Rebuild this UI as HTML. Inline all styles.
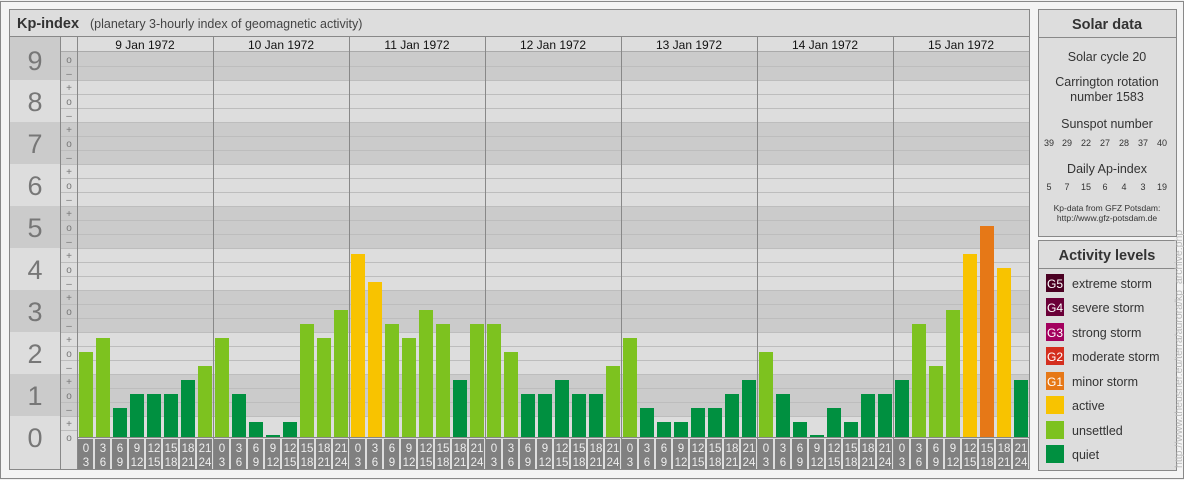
<!DOCTYPE html>
<html><head><meta charset="utf-8"><style>
html,body{margin:0;padding:0;background:#f0f0f0;}
svg{display:block;font-family:"Liberation Sans",sans-serif;}
</style></head><body>
<svg width="1184" height="480" viewBox="0 0 1184 480" xmlns="http://www.w3.org/2000/svg">
<rect x="0.5" y="1.5" width="1183" height="477" fill="#f4f4f4" stroke="#888"/>
<rect x="9.5" y="9.5" width="1020" height="460" fill="#dddddd" stroke="#888"/>
<text x="17" y="28" font-size="14.5" font-weight="bold" fill="#333">Kp-index</text>
<text x="90" y="28" font-size="12.5" fill="#444">(planetary 3-hourly index of geomagnetic activity)</text>
<line x1="10" y1="36.5" x2="1029" y2="36.5" stroke="#888"/>
<g fill="#cbcbcb">
<rect x="10" y="37" width="51" height="43"/>
<rect x="10" y="122" width="51" height="42"/>
<rect x="10" y="206" width="51" height="42"/>
<rect x="10" y="290" width="51" height="42"/>
<rect x="10" y="374" width="51" height="42"/>
<rect x="60" y="52" width="969" height="28"/>
<rect x="60" y="122" width="969" height="42"/>
<rect x="60" y="206" width="969" height="42"/>
<rect x="60" y="290" width="969" height="42"/>
<rect x="60" y="374" width="969" height="42"/>
</g>
<g stroke="#bdbdbd" stroke-width="1">
<line x1="60" y1="66.5" x2="1029" y2="66.5"/><line x1="60" y1="80.5" x2="1029" y2="80.5"/>
<line x1="60" y1="94.5" x2="1029" y2="94.5"/><line x1="60" y1="108.5" x2="1029" y2="108.5"/>
<line x1="60" y1="122.5" x2="1029" y2="122.5"/><line x1="60" y1="136.5" x2="1029" y2="136.5"/>
<line x1="60" y1="150.5" x2="1029" y2="150.5"/><line x1="60" y1="164.5" x2="1029" y2="164.5"/>
<line x1="60" y1="178.5" x2="1029" y2="178.5"/><line x1="60" y1="192.5" x2="1029" y2="192.5"/>
<line x1="60" y1="206.5" x2="1029" y2="206.5"/><line x1="60" y1="220.5" x2="1029" y2="220.5"/>
<line x1="60" y1="234.5" x2="1029" y2="234.5"/><line x1="60" y1="248.5" x2="1029" y2="248.5"/>
<line x1="60" y1="262.5" x2="1029" y2="262.5"/><line x1="60" y1="276.5" x2="1029" y2="276.5"/>
<line x1="60" y1="290.5" x2="1029" y2="290.5"/><line x1="60" y1="304.5" x2="1029" y2="304.5"/>
<line x1="60" y1="318.5" x2="1029" y2="318.5"/><line x1="60" y1="332.5" x2="1029" y2="332.5"/>
<line x1="60" y1="346.5" x2="1029" y2="346.5"/><line x1="60" y1="360.5" x2="1029" y2="360.5"/>
<line x1="60" y1="374.5" x2="1029" y2="374.5"/><line x1="60" y1="388.5" x2="1029" y2="388.5"/>
<line x1="60" y1="402.5" x2="1029" y2="402.5"/><line x1="60" y1="416.5" x2="1029" y2="416.5"/>
<line x1="60" y1="430.5" x2="77" y2="430.5"/>
</g>
<rect x="77" y="37" width="952" height="14" fill="#dddddd"/>
<line x1="60" y1="51.5" x2="1029" y2="51.5" stroke="#aaa"/>
<g font-size="12" fill="#111" text-anchor="middle">
<text x="145" y="49">9 Jan 1972</text><text x="281" y="49">10 Jan 1972</text>
<text x="417" y="49">11 Jan 1972</text><text x="553" y="49">12 Jan 1972</text>
<text x="689" y="49">13 Jan 1972</text><text x="825" y="49">14 Jan 1972</text>
<text x="961" y="49">15 Jan 1972</text>
</g>
<g font-size="27" fill="#777" text-anchor="middle">
<text x="35" y="70">9</text><text x="35" y="111">8</text><text x="35" y="153">7</text>
<text x="35" y="195">6</text><text x="35" y="237">5</text><text x="35" y="279">4</text>
<text x="35" y="321">3</text><text x="35" y="363">2</text><text x="35" y="405">1</text>
<text x="35" y="447">0</text>
</g>
<g font-size="10" fill="#777" text-anchor="middle">
<text x="69" y="63">o</text><text x="69" y="77">–</text>
<text x="69" y="91">+</text><text x="69" y="105">o</text><text x="69" y="119">–</text>
<text x="69" y="133">+</text><text x="69" y="147">o</text><text x="69" y="161">–</text>
<text x="69" y="175">+</text><text x="69" y="189">o</text><text x="69" y="203">–</text>
<text x="69" y="217">+</text><text x="69" y="231">o</text><text x="69" y="245">–</text>
<text x="69" y="259">+</text><text x="69" y="273">o</text><text x="69" y="287">–</text>
<text x="69" y="301">+</text><text x="69" y="315">o</text><text x="69" y="329">–</text>
<text x="69" y="343">+</text><text x="69" y="357">o</text><text x="69" y="371">–</text>
<text x="69" y="385">+</text><text x="69" y="399">o</text><text x="69" y="413">–</text>
<text x="69" y="427">+</text><text x="69" y="441">o</text>
</g>
<g>
<rect x="79" y="352" width="14" height="85" fill="#7dc21f"/>
<rect x="96" y="338" width="14" height="99" fill="#7dc21f"/>
<rect x="113" y="408" width="14" height="29" fill="#009040"/>
<rect x="130" y="394" width="14" height="43" fill="#009040"/>
<rect x="147" y="394" width="14" height="43" fill="#009040"/>
<rect x="164" y="394" width="14" height="43" fill="#009040"/>
<rect x="181" y="380" width="14" height="57" fill="#009040"/>
<rect x="198" y="366" width="14" height="71" fill="#7dc21f"/>
<rect x="215" y="338" width="14" height="99" fill="#7dc21f"/>
<rect x="232" y="394" width="14" height="43" fill="#009040"/>
<rect x="249" y="422" width="14" height="15" fill="#009040"/>
<rect x="266" y="435" width="14" height="2" fill="#009040"/>
<rect x="283" y="422" width="14" height="15" fill="#009040"/>
<rect x="300" y="324" width="14" height="113" fill="#7dc21f"/>
<rect x="317" y="338" width="14" height="99" fill="#7dc21f"/>
<rect x="334" y="310" width="14" height="127" fill="#7dc21f"/>
<rect x="351" y="254" width="14" height="183" fill="#f8c300"/>
<rect x="368" y="282" width="14" height="155" fill="#f8c300"/>
<rect x="385" y="324" width="14" height="113" fill="#7dc21f"/>
<rect x="402" y="338" width="14" height="99" fill="#7dc21f"/>
<rect x="419" y="310" width="14" height="127" fill="#7dc21f"/>
<rect x="436" y="324" width="14" height="113" fill="#7dc21f"/>
<rect x="453" y="380" width="14" height="57" fill="#009040"/>
<rect x="470" y="324" width="14" height="113" fill="#7dc21f"/>
<rect x="487" y="324" width="14" height="113" fill="#7dc21f"/>
<rect x="504" y="352" width="14" height="85" fill="#7dc21f"/>
<rect x="521" y="394" width="14" height="43" fill="#009040"/>
<rect x="538" y="394" width="14" height="43" fill="#009040"/>
<rect x="555" y="380" width="14" height="57" fill="#009040"/>
<rect x="572" y="394" width="14" height="43" fill="#009040"/>
<rect x="589" y="394" width="14" height="43" fill="#009040"/>
<rect x="606" y="366" width="14" height="71" fill="#7dc21f"/>
<rect x="623" y="338" width="14" height="99" fill="#7dc21f"/>
<rect x="640" y="408" width="14" height="29" fill="#009040"/>
<rect x="657" y="422" width="14" height="15" fill="#009040"/>
<rect x="674" y="422" width="14" height="15" fill="#009040"/>
<rect x="691" y="408" width="14" height="29" fill="#009040"/>
<rect x="708" y="408" width="14" height="29" fill="#009040"/>
<rect x="725" y="394" width="14" height="43" fill="#009040"/>
<rect x="742" y="380" width="14" height="57" fill="#009040"/>
<rect x="759" y="352" width="14" height="85" fill="#7dc21f"/>
<rect x="776" y="394" width="14" height="43" fill="#009040"/>
<rect x="793" y="422" width="14" height="15" fill="#009040"/>
<rect x="810" y="435" width="14" height="2" fill="#009040"/>
<rect x="827" y="408" width="14" height="29" fill="#009040"/>
<rect x="844" y="422" width="14" height="15" fill="#009040"/>
<rect x="861" y="394" width="14" height="43" fill="#009040"/>
<rect x="878" y="394" width="14" height="43" fill="#009040"/>
<rect x="895" y="380" width="14" height="57" fill="#009040"/>
<rect x="912" y="324" width="14" height="113" fill="#7dc21f"/>
<rect x="929" y="366" width="14" height="71" fill="#7dc21f"/>
<rect x="946" y="310" width="14" height="127" fill="#7dc21f"/>
<rect x="963" y="254" width="14" height="183" fill="#f8c300"/>
<rect x="980" y="226" width="14" height="211" fill="#e67817"/>
<rect x="997" y="268" width="14" height="169" fill="#f8c300"/>
<rect x="1014" y="380" width="14" height="57" fill="#009040"/>
</g>
<rect x="77" y="437" width="952" height="32" fill="#dddddd"/>
<line x1="77" y1="437.5" x2="1029" y2="437.5" stroke="#888"/>
<g fill="#808080">
<rect x="78" y="439" width="15" height="30"/><rect x="95" y="439" width="15" height="30"/><rect x="112" y="439" width="15" height="30"/><rect x="129" y="439" width="15" height="30"/><rect x="146" y="439" width="15" height="30"/><rect x="163" y="439" width="15" height="30"/><rect x="180" y="439" width="15" height="30"/><rect x="197" y="439" width="15" height="30"/>
<rect x="214" y="439" width="15" height="30"/><rect x="231" y="439" width="15" height="30"/><rect x="248" y="439" width="15" height="30"/><rect x="265" y="439" width="15" height="30"/><rect x="282" y="439" width="15" height="30"/><rect x="299" y="439" width="15" height="30"/><rect x="316" y="439" width="15" height="30"/><rect x="333" y="439" width="15" height="30"/>
<rect x="350" y="439" width="15" height="30"/><rect x="367" y="439" width="15" height="30"/><rect x="384" y="439" width="15" height="30"/><rect x="401" y="439" width="15" height="30"/><rect x="418" y="439" width="15" height="30"/><rect x="435" y="439" width="15" height="30"/><rect x="452" y="439" width="15" height="30"/><rect x="469" y="439" width="15" height="30"/>
<rect x="486" y="439" width="15" height="30"/><rect x="503" y="439" width="15" height="30"/><rect x="520" y="439" width="15" height="30"/><rect x="537" y="439" width="15" height="30"/><rect x="554" y="439" width="15" height="30"/><rect x="571" y="439" width="15" height="30"/><rect x="588" y="439" width="15" height="30"/><rect x="605" y="439" width="15" height="30"/>
<rect x="622" y="439" width="15" height="30"/><rect x="639" y="439" width="15" height="30"/><rect x="656" y="439" width="15" height="30"/><rect x="673" y="439" width="15" height="30"/><rect x="690" y="439" width="15" height="30"/><rect x="707" y="439" width="15" height="30"/><rect x="724" y="439" width="15" height="30"/><rect x="741" y="439" width="15" height="30"/>
<rect x="758" y="439" width="15" height="30"/><rect x="775" y="439" width="15" height="30"/><rect x="792" y="439" width="15" height="30"/><rect x="809" y="439" width="15" height="30"/><rect x="826" y="439" width="15" height="30"/><rect x="843" y="439" width="15" height="30"/><rect x="860" y="439" width="15" height="30"/><rect x="877" y="439" width="15" height="30"/>
<rect x="894" y="439" width="15" height="30"/><rect x="911" y="439" width="15" height="30"/><rect x="928" y="439" width="15" height="30"/><rect x="945" y="439" width="15" height="30"/><rect x="962" y="439" width="15" height="30"/><rect x="979" y="439" width="15" height="30"/><rect x="996" y="439" width="15" height="30"/><rect x="1013" y="439" width="15" height="30"/>
</g>
<g font-size="11.5" fill="#eee" text-anchor="middle">
<text x="86" y="452">0</text><text x="103" y="452">3</text><text x="120" y="452">6</text><text x="137" y="452">9</text><text x="154" y="452">12</text><text x="171" y="452">15</text><text x="188" y="452">18</text><text x="205" y="452">21</text>
<text x="86" y="466">3</text><text x="103" y="466">6</text><text x="120" y="466">9</text><text x="137" y="466">12</text><text x="154" y="466">15</text><text x="171" y="466">18</text><text x="188" y="466">21</text><text x="205" y="466">24</text>
<text x="222" y="452">0</text><text x="239" y="452">3</text><text x="256" y="452">6</text><text x="273" y="452">9</text><text x="290" y="452">12</text><text x="307" y="452">15</text><text x="324" y="452">18</text><text x="341" y="452">21</text>
<text x="222" y="466">3</text><text x="239" y="466">6</text><text x="256" y="466">9</text><text x="273" y="466">12</text><text x="290" y="466">15</text><text x="307" y="466">18</text><text x="324" y="466">21</text><text x="341" y="466">24</text>
<text x="358" y="452">0</text><text x="375" y="452">3</text><text x="392" y="452">6</text><text x="409" y="452">9</text><text x="426" y="452">12</text><text x="443" y="452">15</text><text x="460" y="452">18</text><text x="477" y="452">21</text>
<text x="358" y="466">3</text><text x="375" y="466">6</text><text x="392" y="466">9</text><text x="409" y="466">12</text><text x="426" y="466">15</text><text x="443" y="466">18</text><text x="460" y="466">21</text><text x="477" y="466">24</text>
<text x="494" y="452">0</text><text x="511" y="452">3</text><text x="528" y="452">6</text><text x="545" y="452">9</text><text x="562" y="452">12</text><text x="579" y="452">15</text><text x="596" y="452">18</text><text x="613" y="452">21</text>
<text x="494" y="466">3</text><text x="511" y="466">6</text><text x="528" y="466">9</text><text x="545" y="466">12</text><text x="562" y="466">15</text><text x="579" y="466">18</text><text x="596" y="466">21</text><text x="613" y="466">24</text>
<text x="630" y="452">0</text><text x="647" y="452">3</text><text x="664" y="452">6</text><text x="681" y="452">9</text><text x="698" y="452">12</text><text x="715" y="452">15</text><text x="732" y="452">18</text><text x="749" y="452">21</text>
<text x="630" y="466">3</text><text x="647" y="466">6</text><text x="664" y="466">9</text><text x="681" y="466">12</text><text x="698" y="466">15</text><text x="715" y="466">18</text><text x="732" y="466">21</text><text x="749" y="466">24</text>
<text x="766" y="452">0</text><text x="783" y="452">3</text><text x="800" y="452">6</text><text x="817" y="452">9</text><text x="834" y="452">12</text><text x="851" y="452">15</text><text x="868" y="452">18</text><text x="885" y="452">21</text>
<text x="766" y="466">3</text><text x="783" y="466">6</text><text x="800" y="466">9</text><text x="817" y="466">12</text><text x="834" y="466">15</text><text x="851" y="466">18</text><text x="868" y="466">21</text><text x="885" y="466">24</text>
<text x="902" y="452">0</text><text x="919" y="452">3</text><text x="936" y="452">6</text><text x="953" y="452">9</text><text x="970" y="452">12</text><text x="987" y="452">15</text><text x="1004" y="452">18</text><text x="1021" y="452">21</text>
<text x="902" y="466">3</text><text x="919" y="466">6</text><text x="936" y="466">9</text><text x="953" y="466">12</text><text x="970" y="466">15</text><text x="987" y="466">18</text><text x="1004" y="466">21</text><text x="1021" y="466">24</text>
</g>
<g stroke="#888">
<line x1="60.5" y1="37" x2="60.5" y2="469"/>
<line x1="77.5" y1="37" x2="77.5" y2="469"/>
<line x1="213.5" y1="37" x2="213.5" y2="469"/>
<line x1="349.5" y1="37" x2="349.5" y2="469"/>
<line x1="485.5" y1="37" x2="485.5" y2="469"/>
<line x1="621.5" y1="37" x2="621.5" y2="469"/>
<line x1="757.5" y1="37" x2="757.5" y2="469"/>
<line x1="893.5" y1="37" x2="893.5" y2="469"/>
</g>
<rect x="1038.5" y="9.5" width="138" height="227" fill="#dddddd" stroke="#888"/>
<line x1="1039" y1="37.5" x2="1176" y2="37.5" stroke="#888"/>
<g text-anchor="middle" fill="#333">
<text x="1107" y="29" font-size="14.5" font-weight="bold">Solar data</text>
<text x="1107" y="61" font-size="12.5">Solar cycle 20</text>
<text x="1107" y="86" font-size="12.5">Carrington rotation</text>
<text x="1107" y="101" font-size="12.5">number 1583</text>
<text x="1107" y="128" font-size="12.5">Sunspot number</text>
<text x="1107" y="173" font-size="12.5">Daily Ap-index</text>
<text x="1107" y="211" font-size="8.5">Kp-data from GFZ Potsdam:</text>
<text x="1107" y="221" font-size="8.5">http://www.gfz-potsdam.de</text>
</g>
<g text-anchor="middle" fill="#333" font-size="9">
<text x="1049" y="146">39</text><text x="1067" y="146">29</text><text x="1086" y="146">22</text><text x="1105" y="146">27</text><text x="1124" y="146">28</text><text x="1143" y="146">37</text><text x="1162" y="146">40</text>
<text x="1049" y="190">5</text><text x="1067" y="190">7</text><text x="1086" y="190">15</text><text x="1105" y="190">6</text><text x="1124" y="190">4</text><text x="1143" y="190">3</text><text x="1162" y="190">19</text>
</g>
<rect x="1038.5" y="240.5" width="138" height="230" fill="#dddddd" stroke="#888"/>
<line x1="1039" y1="268.5" x2="1176" y2="268.5" stroke="#888"/>
<text x="1107" y="260" font-size="14.5" font-weight="bold" fill="#333" text-anchor="middle">Activity levels</text>
<rect x="1046" y="274" width="18" height="18" fill="#4a0022"/>
<rect x="1046" y="298" width="18" height="18" fill="#6a0038"/>
<rect x="1046" y="323" width="18" height="18" fill="#a3005e"/>
<rect x="1046" y="347" width="18" height="18" fill="#d42e1e"/>
<rect x="1046" y="372" width="18" height="18" fill="#e67817"/>
<rect x="1046" y="396" width="18" height="18" fill="#f8c300"/>
<rect x="1046" y="421" width="18" height="18" fill="#7dc21f"/>
<rect x="1046" y="445" width="18" height="18" fill="#009040"/>
<g fill="#fff" font-size="12" text-anchor="middle">
<text x="1055" y="288">G5</text><text x="1055" y="312">G4</text><text x="1055" y="337">G3</text><text x="1055" y="361">G2</text><text x="1055" y="386">G1</text>
</g>
<g fill="#333" font-size="12.5">
<text x="1072" y="288">extreme storm</text>
<text x="1072" y="312">severe storm</text>
<text x="1072" y="337">strong storm</text>
<text x="1072" y="361">moderate storm</text>
<text x="1072" y="386">minor storm</text>
<text x="1072" y="410">active</text>
<text x="1072" y="435">unsettled</text>
<text x="1072" y="459">quiet</text>
</g>
<text transform="translate(1182,468) rotate(-90)" font-size="10.5" fill="#b8b8b8">http://www.theusner.eu/terra/aurora/kp_archive.php</text>
</svg>
</body></html>
